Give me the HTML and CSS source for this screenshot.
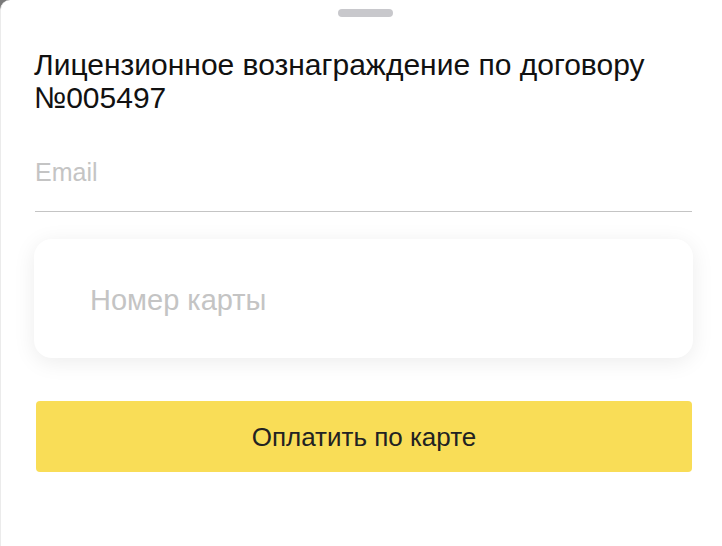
FILE: index.html
```html
<!DOCTYPE html>
<html lang="ru">
<head>
    <meta charset="UTF-8">
    <meta name="viewport" content="width=device-width, initial-scale=1.0">
    <title>Оплата</title>
    <link rel="stylesheet" href="styles.css">
</head>
<body>
    <div class="sheet">
        <div class="handle"></div>

        <h1 class="title">Лицензионное вознаграждение по договору №005497</h1>

        <!-- Email field -->
        <div class="field">
            <span class="placeholder">Email</span>
        </div>

        <!-- Card number -->
        <div class="card">
            <span class="placeholder card-placeholder">Номер карты</span>
        </div>

        <button class="pay-button">Оплатить по карте</button>
    </div>
</body>
</html>
```

FILE: styles.css
```css
/* Base styles */
* {
    margin: 0;
    padding: 0;
    box-sizing: border-box;
}

body {
    font-family: 'Liberation Sans', Arial, sans-serif;
    color: #111;
    background-color: #7a7a7a;
    height: 546px;
    overflow: hidden;
}

/* Bottom sheet */
.sheet {
    background: #fff;
    height: 546px;
    border-top-left-radius: 10px;
    border-left: 1px solid #ebebeb;
    padding: 9px 29px 0 33px;
}

.handle {
    width: 55px;
    height: 8px;
    border-radius: 4px;
    background: #c8c8cc;
    margin: 0 auto;
    position: relative;
    left: 2px;
}

/* Typography */
.title {
    font-size: 30px;
    font-weight: normal;
    line-height: 33px;
    margin-top: 31px;
    color: #111;
}

.placeholder {
    color: #c4c4c4;
    font-size: 25px;
    line-height: 30px;
}

.card-placeholder {
    font-size: 29px;
    line-height: 34px;
}

/* Email input */
.field {
    margin-top: 43px;
    padding-bottom: 24px;
    border-bottom: 1px solid #c4c4c4;
    margin-right: 1px;
    margin-left: 1px;
}

/* Card input */
.card {
    margin-top: 27px;
    height: 119px;
    border-radius: 18px;
    background: #fff;
    box-shadow: 0 4px 22px rgba(0, 0, 0, 0.08);
    display: flex;
    align-items: center;
    padding: 3px 0 0 56px;
}

/* Pay button */
.pay-button {
    display: block;
    width: 656px;
    height: 71px;
    margin: 43px 0 0 2px;
    border: none;
    border-radius: 4px;
    background: #f9dd57;
    color: #222;
    font-family: inherit;
    font-size: 26px;
    padding-top: 2px;
}
```
